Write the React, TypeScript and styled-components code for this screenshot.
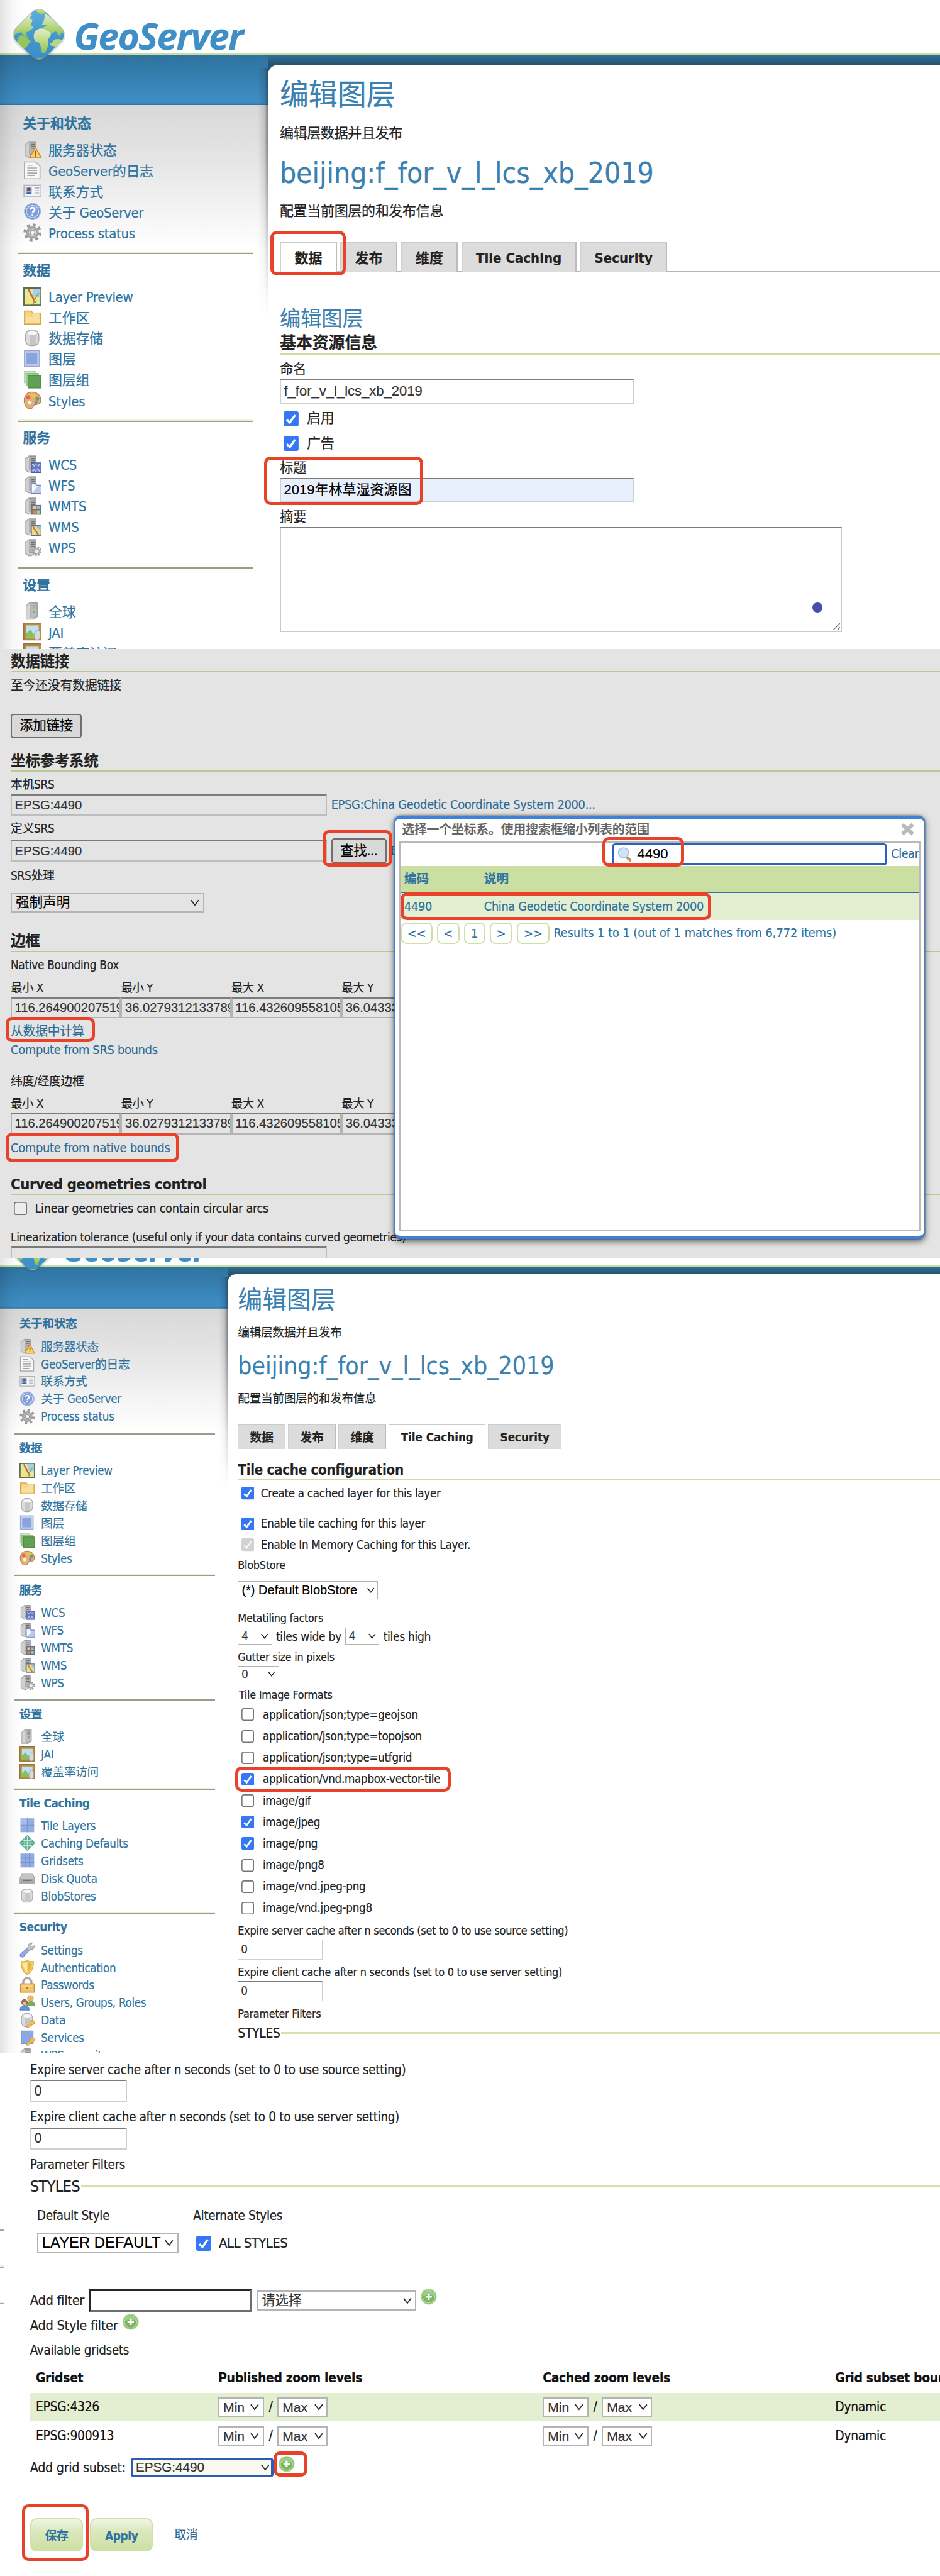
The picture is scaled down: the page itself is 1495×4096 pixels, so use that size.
import React from "react";
import styled, { createGlobalStyle, css } from "styled-components";

const ui = `"DejaVu Sans Condensed", "DejaVu Sans", "Noto Sans CJK SC", sans-serif`;
const field = `"Liberation Sans", "Noto Sans CJK SC", sans-serif`;
const link = "#2f74a0";
const title = "#3a80b0";
const mark = "#e8432a";

const Global = createGlobalStyle`
  html, body { margin: 0; padding: 0; background: #fff; }
  * { box-sizing: border-box; }
`;

const Page = styled.div`
  zoom: 0.9183;
  width: 1628px;
  height: 4460px;
  overflow: hidden;
  display: flex;
  flex-direction: column;
  background: #fff;
  color: #222;
  font-family: ${ui};
  font-stretch: condensed;
  font-size: 24px;
  letter-spacing: -0.015em;
  line-height: 31px;
  white-space: nowrap;
  -webkit-text-stroke: 0.25px;
`;

/* ---------- shared parts ---------- */

const Shot = styled.section<{ $h: number; $bg?: string }>`
  position: relative;
  flex: none;
  height: ${(p) => p.$h}px;
  overflow: hidden;
  background: ${(p) => p.$bg || "#fff"};
`;

const Mark = styled.div<{ $x: number; $y: number; $w: number; $h: number; $t?: number }>`
  position: absolute;
  z-index: 5;
  left: ${(p) => p.$x}px;
  top: ${(p) => p.$y}px;
  width: ${(p) => p.$w}px;
  height: ${(p) => p.$h}px;
  border: ${(p) => p.$t || 5.5}px solid ${mark};
  border-radius: 11px;
`;

const Label = styled.div<{ $gap?: number; $size?: number; $x?: number; $track?: number }>`
  flex: none;
  height: 30px;
  margin-top: ${(p) => p.$gap || 0}px;
  padding-left: ${(p) => p.$x || 0}px;
  font-size: ${(p) => p.$size || 24}px;
  letter-spacing: ${(p) => p.$track ?? -0.015}em;
`;

const Row = styled.div<{ $gap?: number; $h: number; $space?: number; $x?: number }>`
  flex: none;
  display: flex;
  align-items: center;
  height: ${(p) => p.$h}px;
  margin-top: ${(p) => p.$gap || 0}px;
  padding-left: ${(p) => p.$x || 0}px;
  gap: ${(p) => p.$space || 0}px;
`;

const Section = styled.div<{ $gap: number; $h: number; $size: number; $rule?: string }>`
  flex: none;
  height: ${(p) => p.$h}px;
  margin-top: ${(p) => p.$gap}px;
  border-bottom: 2.2px solid ${(p) => p.$rule || "#cddc9f"};
  font-weight: bold;
  font-size: ${(p) => p.$size}px;
  line-height: ${(p) => p.$h - 3}px;
`;

const Field = styled.div<{ $gap?: number; $w: number; $h: number; $bg?: string; $size?: number; $side?: string; $ink?: string }>`
  flex: none;
  display: flex;
  align-items: center;
  width: ${(p) => p.$w}px;
  height: ${(p) => p.$h}px;
  margin-top: ${(p) => p.$gap || 0}px;
  padding: 0 5px;
  overflow: hidden;
  border: 2.2px solid ${(p) => p.$side || "#cfcfcf"};
  border-top-color: #7b7b7b;
  background: ${(p) => p.$bg || "transparent"};
  color: ${(p) => p.$ink || "#333"};
  font-family: ${field};
  font-size: ${(p) => p.$size || 24}px;
  letter-spacing: 0;
`;

const Digits = styled.span`
  font-family: ${ui};
  font-size: 24px;
`;

const SelectBox = styled.div<{ $gap?: number; $w: number; $h: number; $size?: number; $focus?: boolean; $x?: number; $dark?: boolean; $bg?: string }>`
  flex: none;
  display: flex;
  align-items: center;
  justify-content: space-between;
  width: ${(p) => p.$w}px;
  height: ${(p) => p.$h}px;
  margin-top: ${(p) => p.$gap || 0}px;
  padding: 0 6px 0 ${(p) => p.$x || 6.5}px;
  border: 2.2px solid #b4b4b4;
  background: ${(p) => p.$bg || "#fff"};
  color: ${(p) => (p.$dark ? "#000" : "#333")};
  font-family: ${field};
  font-size: ${(p) => p.$size || 24}px;
  letter-spacing: 0;
  ${(p) =>
    p.$focus &&
    css`
      border: 4.4px solid #2b5cb8;
      border-radius: 5px;
      background: #f9f9f0;
      padding: 0 3px 0 4px;
    `}
`;

const Select = ({ text, ...rest }: { text: string } & React.ComponentProps<typeof SelectBox>) => (
  <SelectBox {...rest}>
    <span>{text}</span>
    <svg width="15" height="12" viewBox="0 0 15 12">
      <path d="M1 1.5 7.5 10 14 1.5" fill="none" stroke="#222" strokeWidth="1.9" />
    </svg>
  </SelectBox>
);

const Check = ({ state = "off", size = 26 }: { state?: "on" | "off" | "grey"; size?: number }) => (
  <svg width={size} height={size} viewBox="0 0 26 26">
    {state === "off" ? (
      <rect x="1.1" y="1.1" width="23.8" height="23.8" rx="4" fill="#fff" fillOpacity="0.35" stroke="#767676" strokeWidth="2" />
    ) : (
      <>
        <rect width="26" height="26" rx="3.5" fill={state === "on" ? "#3478f6" : "#d2d2d2"} />
        <path d="M5.5 14.5 10.8 19.5 20 6.5" fill="none" stroke={state === "on" ? "#fff" : "#f4f4f4"} strokeWidth="3.6" />
      </>
    )}
  </svg>
);

const PlusIcon = styled.svg.attrs({ viewBox: "0 0 28 28" })<{ $up?: number }>`
  flex: none;
  width: 28px;
  height: 28px;
  margin-bottom: ${(p) => p.$up || 0}px;
`;

const Plus = ({ up }: { up?: number }) => (
  <PlusIcon $up={up}>
    <circle cx="14" cy="14" r="13" fill="#8cc070" stroke="#a9d394" strokeWidth="1.6" />
    <circle cx="14" cy="14" r="10.6" fill="#7bb562" stroke="#c3e0b3" strokeWidth="1" />
    <path d="M4.5 13a9.5 9.5 0 0 1 19 0c-5-3-13-3-19 0z" fill="#a8d594" opacity="0.7" />
    <path d="M14 8.5v11M8.5 14h11" stroke="#fff" strokeWidth="3.4" />
  </PlusIcon>
);

/* ---------- sidebar icons, 16-unit grid ---------- */

const Server = () => (
  <>
    <path d="M1.5 4 5 1h6v11.5L7 15H4.5l-3-2z" fill="#cfcfcf" stroke="#a2a2a2" strokeWidth=".7" />
    <path d="M5.5 1.5H11v11H5.5z" fill="#b4b4b4" stroke="#8b8b8b" strokeWidth=".6" />
    <path d="M6.5 3.5h3.5M6.5 5.2h3.5M6.5 6.9h3.5" stroke="#6d6d6d" strokeWidth=".8" />
  </>
);
const Drum = () => (
  <>
    <rect x="2" y="1" width="11.5" height="13.5" rx="4.5" fill="#dcdcdc" stroke="#a9a9a9" strokeWidth=".8" />
    <rect x="5.6" y="4.6" width="5.4" height="9" fill="#c6c6c6" />
    <ellipse cx="7.8" cy="3.6" rx="4.6" ry="1.9" fill="#f6f6f6" stroke="#c4c4c4" strokeWidth=".5" />
  </>
);
const KeyShape = () => (
  <path d="M15.4 9.3a2.5 2.5 0 0 0-4.1-.6 2.4 2.4 0 0 0-.4 2.4L7 14.1l.4 1.5 1.9-.1 3.1-3a2.5 2.5 0 0 0 3-3.2z" fill="#f2c24f" stroke="#c8902b" strokeWidth=".6" />
);
const Picture = () => (
  <>
    <rect x=".4" y=".4" width="15.2" height="14.6" fill="#b98d43" stroke="#8e6a30" strokeWidth=".7" />
    <rect x="2.4" y="2.4" width="11" height="10.6" fill="#bfe0f3" />
    <path d="M2.4 9.5 6 6l3 4 4.4-3v6h-11z" fill="#86c25b" />
    <path d="M11.5 6.5a2.4 2.4 0 0 1 3 2.6v3.4a2.4 2.4 0 0 1-4.8 0V9z" fill="#d9d9d9" stroke="#a5a5a5" strokeWidth=".6" />
  </>
);

const icons: Record<string, React.ReactNode> = {
  status: (
    <>
      <Server />
      <path d="M10.6 6.3 15.6 15.3H5.4z" fill="#f6d470" stroke="#d5882a" strokeWidth=".9" strokeLinejoin="round" />
      <path d="M10.6 9.2v3.2M10.6 13.2v1" stroke="#8a5a12" strokeWidth="1.1" />
    </>
  ),
  logs: (
    <>
      <path d="M1 .8h9.6l3.9 3.6v11H1z" fill="#f8f8f8" stroke="#ababab" strokeWidth=".9" />
      <path d="M3.5 3.7h5M3.5 6h8.5M3.5 8.2h8.5M3.5 10.4h8.5M3.5 12.6h6.5" stroke="#a5a5a5" strokeWidth=".9" />
    </>
  ),
  contact: (
    <>
      <path d="M.6 3h14.8v10H.6z" fill="#f4f4f4" stroke="#b0b0b0" strokeWidth=".8" />
      <rect x="2" y="4.4" width="5.4" height="6.2" fill="#86b4ea" />
      <circle cx="4.8" cy="6.6" r="1.6" fill="#8a4b2c" />
      <path d="M2.4 10.6c.4-2 4.4-2 4.9 0z" fill="#3565b5" />
      <path d="M9.8 5.4h4" stroke="#84aee0" strokeWidth=".9" />
      <path d="M9.8 7.6h4M9.8 9.8h4" stroke="#bdbdbd" strokeWidth=".9" />
    </>
  ),
  about: (
    <>
      <circle cx="8" cy="7.8" r="6.9" fill="#6c8fd0" stroke="#a7bce2" strokeWidth="1" />
      <circle cx="8" cy="7.8" r="5.4" fill="#7d9edb" stroke="#dbe5f7" strokeWidth=".7" />
      <path d="M6.2 6.2c0-2.4 3.8-2.3 3.7-.1 0 1.5-1.9 1.4-1.9 3M8 10.3v1.3" fill="none" stroke="#fff" strokeWidth="1.5" />
    </>
  ),
  gear: (
    <>
      <circle cx="8" cy="8" r="6.4" fill="none" stroke="#9a9a9a" strokeWidth="2.8" strokeDasharray="2.5 2.52" />
      <circle cx="8" cy="8" r="4.3" fill="#dedede" stroke="#a8a8a8" strokeWidth="2.4" />
      <circle cx="8" cy="8" r="2" fill="#f7f7f7" stroke="#8f8f8f" strokeWidth=".7" />
    </>
  ),
  preview: (
    <>
      <rect x=".6" y=".6" width="14.8" height="14.8" fill="#dfe9a6" stroke="#5d6f4e" strokeWidth="1.2" />
      <path d="M8 1.2h6.8v7.3L9 9z" fill="#a9cdee" />
      <path d="M1.2 9 8 6l3 5-4 3.8H1.2z" fill="#f0e488" />
      <path d="M4.5 1.5c1.5 4 3.5 6 6 12" fill="none" stroke="#d95f2b" strokeWidth="1.5" />
      <path d="M13.5 5C11 8 9.5 11 8.5 14.6" fill="none" stroke="#8fae4c" strokeWidth="1" />
    </>
  ),
  folder: (
    <>
      <path d="M1 2.5h6l1.500 2H15v9.300H1z" fill="#f4cf76" stroke="#d6a748" strokeWidth=".8" />
      <path d="M3.4 5h4.800l1.200-1.400H14v9H1.800z" fill="#fbe6ad" opacity=".75" />
      <path d="M4.5 6.7h4" stroke="#e0ae4e" strokeWidth=".9" />
    </>
  ),
  store: <Drum />,
  layer: (
    <>
      <rect x="1" y=".8" width="13" height="13.6" fill="#c0d0f0" stroke="#9aaad4" strokeWidth=".9" />
      <rect x="2.8" y="2.6" width="9.4" height="10" fill="#8aa5dc" />
    </>
  ),
  group: (
    <>
      <rect x=".8" y=".8" width="10" height="10" fill="#cfe5cb" stroke="#b3d3ae" strokeWidth=".6" />
      <rect x="2.4" y="2.6" width="10.8" height="10.8" fill="#9bca90" stroke="#7cb271" strokeWidth=".6" />
      <rect x="4.2" y="4.4" width="11" height="10.8" fill="#62a056" stroke="#4c8a44" strokeWidth=".7" />
    </>
  ),
  palette: (
    <>
      <path d="M7.5.8C3 .8.6 4.500.8 8.500c.2 3.800 2 6.800 5.400 6.800 2.500 0 1.700-2.400 3.600-3.400 1.700-.9 5.400.4 5.400-4.300C15.200 3.500 11.800.8 7.500.8z" fill="#e6ae72" stroke="#b87f48" strokeWidth=".7" />
      <circle cx="4.3" cy="5.3" r="1.7" fill="#dc6650" />
      <circle cx="8.6" cy="3.6" r="1.6" fill="#e9c840" />
      <circle cx="12.2" cy="6.5" r="1.6" fill="#5ba56a" />
      <circle cx="11" cy="9.7" r="1.4" fill="#5f8fd0" />
      <circle cx="5.5" cy="9.7" r="1.7" fill="#fbf3e8" />
    </>
  ),
  wcs: (
    <>
      <Server />
      <rect x="7" y="7" width="8.5" height="8.5" fill="#6478c4" stroke="#4a5ca6" strokeWidth=".6" />
      <path d="M8 8l2 2m2 2 2.5 2.5M14.5 8l-2 2m-2 2L8 14.5M11 7.5v1.5M11 13.5V15" stroke="#b8c4ec" strokeWidth="1.2" />
    </>
  ),
  wfs: (
    <>
      <Server />
      <path d="M7 9V7h3.5l1 1.5h4V15.5H7z" fill="#f4f7fd" stroke="#7380ba" strokeWidth=".8" />
      <path d="M8 15l5-6h2v6z" fill="#b9c9ec" />
    </>
  ),
  wmts: (
    <>
      <Server />
      <rect x="7" y="7" width="8.5" height="8.5" fill="#6a6f8c" />
      <rect x="8" y="8" width="2.9" height="2.9" fill="#e8c77c" />
      <rect x="11.7" y="8" width="2.9" height="2.9" fill="#95b7e0" />
      <rect x="8" y="11.7" width="2.9" height="2.9" fill="#d98457" />
      <rect x="11.7" y="11.7" width="2.9" height="2.9" fill="#b7cc74" />
    </>
  ),
  wms: (
    <>
      <Server />
      <rect x="7" y="7" width="8.5" height="8.5" fill="#dfe18e" stroke="#5d6aa0" strokeWidth=".8" />
      <path d="M11 7.5h4v4z" fill="#93bde4" />
      <path d="M8.5 7.5c1 3 3 4 4.5 7.5" fill="none" stroke="#dc6a35" strokeWidth="1.3" />
    </>
  ),
  wps: (
    <>
      <Server />
      <circle cx="11.8" cy="11.2" r="3.2" fill="none" stroke="#9c9c9c" strokeWidth="2" strokeDasharray="1.5 1" />
      <circle cx="11.8" cy="11.2" r="2.2" fill="#eee" stroke="#b0b0b0" strokeWidth="1.2" />
    </>
  ),
  global: (
    <>
      <path d="M2.5 3.5 5.5.8h6.6v12L9 15H2.5z" fill="#d6d6d6" stroke="#a2a2a2" strokeWidth=".7" />
      <path d="M6.5 1.5H12v11L9 14H6.5z" fill="#bcbcbc" stroke="#969696" strokeWidth=".5" />
      <path d="M8 3.5h2.8M8 5.2h2.8" stroke="#808080" strokeWidth=".8" />
      <circle cx="9.5" cy="8.5" r=".9" fill="#5fbf5a" />
    </>
  ),
  image: <Picture />,
  tiles: (
    <>
      <rect x="1" y=".8" width="14" height="14.2" fill="#94aee2" />
      <path d="M8 .8V15M1 8h14" stroke="#7b97d2" strokeWidth=".9" />
      <path d="M1.6 1.4h5.8v6H1.6z" fill="#a8bdea" />
    </>
  ),
  globe: (
    <>
      <path d="M8 .6 15.4 8 8 15.4.6 8z" fill="#52aa96" stroke="#52aa96" strokeWidth="1.2" strokeLinejoin="round" />
      <path d="M8 .8V15.2M.8 8h14.4M3.5 5.5h9M3.5 10.5h9M5.3 3v10M10.7 3v10" stroke="#c9ecd0" strokeWidth=".9" />
    </>
  ),
  grid: (
    <>
      <rect x="1" y=".8" width="14" height="14.2" fill="#93abe2" />
      <path d="M5.6.8V15M10.3.8V15M1 5.5h14M1 10.2h14" stroke="#6f8bcc" strokeWidth=".9" />
    </>
  ),
  disk: (
    <>
      <path d="M2.8 3.2h10.4l2.3 5v5.6H.5V8.2z" fill="#c4c4c4" stroke="#9a9a9a" strokeWidth=".7" />
      <rect x=".9" y="8.4" width="14.2" height="5" fill="#a9a9a9" />
      <path d="M3.5 10.2h9" stroke="#707070" strokeWidth="1.4" />
    </>
  ),
  wrench: (
    <>
      <path d="M9 4.5a3.3 3.3 0 0 1 4.3-3.6L11.6 3l1.2 1.6 2.7-.9a3.3 3.3 0 0 1-4.3 3.8L9.5 9 7.2 7z" fill="#c3c3c3" stroke="#8e8e8e" strokeWidth=".6" />
      <path d="M7 7 9.5 9.2l-5 5.3a2 2 0 0 1-3.4-2.3z" fill="#94abe0" stroke="#6f88c4" strokeWidth=".7" />
    </>
  ),
  shield: (
    <>
      <path d="M8 .8c2 1.2 4.3 1.2 6.3.9C14.5 8 13 12.5 8 15.2 3 12.5 1.5 8 1.7 1.7c2 .3 4.3.3 6.3-.9z" fill="#f3cf62" stroke="#d7a93c" strokeWidth=".8" />
      <path d="M8 3c1.5.8 2.8.9 4.2.8 0 4-1.2 6.8-4.2 9z" fill="#e5b443" />
      <path d="M8 3c-1.5.8-2.8.9-4.2.8 0 4 1.2 6.8 4.2 9z" fill="#fbeaa6" />
    </>
  ),
  lock: (
    <>
      <path d="M3.8 7V5a4.2 4.2 0 0 1 8.4 0v2" fill="none" stroke="#a8a8a8" strokeWidth="2.2" />
      <rect x="1" y="6.6" width="14" height="8.8" fill="#edbf62" stroke="#c79138" strokeWidth=".8" />
      <path d="M2 9.2h12M2 12h12" stroke="#f7dc9a" strokeWidth="1" />
      <circle cx="8" cy="10.8" r="1.2" fill="#b87820" />
    </>
  ),
  users: (
    <>
      <path d="M7.5 10c0-4.5 8-4.5 8 0v1h-8z" fill="#78b35c" stroke="#5c9645" strokeWidth=".5" />
      <circle cx="11.2" cy="3.6" r="3" fill="#e8b96a" stroke="#bf8b45" strokeWidth=".5" />
      <path d="M.6 15c0-5 9.4-5 9.4 0v.6H.6z" fill="#5b97e0" stroke="#3e74bb" strokeWidth=".5" />
      <circle cx="5" cy="7.6" r="3" fill="#a86a48" stroke="#7a4a30" strokeWidth=".5" />
      <circle cx="5.2" cy="8.6" r="1.7" fill="#f0c09a" />
    </>
  ),
  data: (
    <>
      <Drum />
      <KeyShape />
    </>
  ),
  services: (
    <>
      <rect x="2" y=".8" width="12" height="13" fill="#8da8e0" stroke="#7691cf" strokeWidth=".6" />
      <KeyShape />
    </>
  ),
  wpssec: (
    <>
      <Server />
      <KeyShape />
    </>
  ),
};

/* ---------- GeoServer frame ---------- */

const Frame = styled.div<{ $zoom?: number; $pull?: number }>`
  position: relative;
  zoom: ${(p) => p.$zoom || 1};
  margin-top: ${(p) => -(p.$pull || 0)}px;
  height: 1800px;
  display: flex;
  align-items: flex-start;
  background:
    linear-gradient(#c6dca2, #c6dca2) 0 92px / 100% 4px no-repeat,
    linear-gradient(#2f729f, #3d8dc4 90%, #3d8dc4 96%, #2f6d98) 0 96px / 100% 86px no-repeat,
    linear-gradient(#d8d8d8, #e4e4e4 35%, #fff) 0 182px / 100% 250px no-repeat,
    #fff;
  &::before {
    content: "";
    position: absolute;
    inset: 0 auto 0 0;
    width: 44px;
    background: linear-gradient(to right, rgba(0, 0, 0, 0.11), rgba(0, 0, 0, 0.03) 50%, transparent);
  }
`;

const Side = styled.aside<{ $w: number }>`
  flex: none;
  position: relative;
  width: ${(p) => p.$w}px;
  display: flex;
  flex-direction: column;
`;

const Brand = styled.div`
  display: flex;
  height: 182px;
  padding: 10px 0 0 16px;
`;

const BrandName = styled.div`
  margin: 2px 0 0 8px;
  font-family: "Open Sans", "Noto Sans", sans-serif;
  font-stretch: normal;
  font-weight: bold;
  font-style: italic;
  font-size: 64px;
  line-height: 100px;
  letter-spacing: -0.029em;
  color: #3f8fc6;
`;

const Logo = () => (
  <svg width="104" height="106" viewBox="0 0 104 106">
    <defs>
      <linearGradient id="sea" x1="0" y1="0" x2="0" y2="1">
        <stop offset="0" stopColor="#66b3df" />
        <stop offset="0.5" stopColor="#4396cd" />
        <stop offset="1" stopColor="#3a8cc4" />
      </linearGradient>
      <linearGradient id="land" x1="0" y1="0" x2="0" y2="1">
        <stop offset="0" stopColor="#e3eecb" />
        <stop offset="0.6" stopColor="#b4d67a" />
        <stop offset="1" stopColor="#8cc152" />
      </linearGradient>
      <clipPath id="tile">
        <rect x="15.5" y="14.5" width="71" height="71" rx="17" transform="rotate(45 51 50)" />
      </clipPath>
    </defs>
    <rect x="14.5" y="13.5" width="73" height="73" rx="18" transform="rotate(45 51 50)" fill="rgba(90,90,90,.28)" />
    <rect x="13" y="14" width="76" height="76" rx="19" transform="rotate(45 51 52)" fill="rgba(90,90,90,.14)" />
    <g clipPath="url(#tile)">
      <rect width="104" height="106" fill="url(#sea)" />
      <path d="M44 5q7-5 19 1l-2 8-6 2-7-5z" fill="url(#land)" />
      <path d="M4 44 20 25l14-12 5 3-4 5 5 5-3 7 5 5-8 6-6 3 4 9-6-4-7-6-8 3-4 3z" fill="url(#land)" />
      <path d="M17 52q8-2 12 3l8 6-7 10-10 7-8-14z" fill="#93c65c" />
      <path d="M62 14l20 14 20 20-6 5-5-8-4 8-7-9-7 5-6-5-8 1-1-7 7-4-9-1 4-8z" fill="url(#land)" />
      <path d="M45 44q9-8 18-2l9 5-1 6-4 5v11l-5 13q-6 2-7-5l-2-12-8-3q-6-9 0-18z" fill="url(#land)" />
      <path d="M71 66l8-8 9 0 4 3-12 10-9-2z" fill="#b5d980" />
      <path d="M38 96q8-6 26-6l-2 12H42z" fill="#8cc152" />
    </g>
  </svg>
);

const NavGroup = styled.div<{ $first?: boolean }>`
  display: flex;
  flex-direction: column;
  margin-top: ${(p) => (p.$first ? 14 : 10.5)}px;
`;

const NavTitle = styled.div`
  height: 36px;
  margin: 0 0 11px;
  padding-left: 39.5px;
  line-height: 37px;
  font-weight: bold;
  color: ${link};
`;

const NavItem = styled.a`
  display: flex;
  align-items: center;
  height: 36px;
  padding-left: 40px;
  gap: 12px;
  color: ${link};
  line-height: 37px;
`;

const NavIcon = styled.svg.attrs({ viewBox: "0 0 16 16" })`
  width: 32px;
  height: 32px;
  margin-bottom: 4px;
`;

const Divider = styled.div`
  height: 4px;
  margin: 13px 26px 0 30px;
  background: linear-gradient(#eef2d8 45%, #999e8b 45%);
`;

type Entry = [string, string];
const nav: [string, Entry[]][] = [
  ["关于和状态", [["status", "服务器状态"], ["logs", "GeoServer的日志"], ["contact", "联系方式"], ["about", "关于 GeoServer"], ["gear", "Process status"]]],
  ["数据", [["preview", "Layer Preview"], ["folder", "工作区"], ["store", "数据存储"], ["layer", "图层"], ["group", "图层组"], ["palette", "Styles"]]],
  ["服务", [["wcs", "WCS"], ["wfs", "WFS"], ["wmts", "WMTS"], ["wms", "WMS"], ["wps", "WPS"]]],
  ["设置", [["global", "全球"], ["image", "JAI"], ["image", "覆盖率访问"]]],
  ["Tile Caching", [["tiles", "Tile Layers"], ["globe", "Caching Defaults"], ["grid", "Gridsets"], ["disk", "Disk Quota"], ["store", "BlobStores"]]],
  ["Security", [["wrench", "Settings"], ["shield", "Authentication"], ["lock", "Passwords"], ["users", "Users, Groups, Roles"], ["data", "Data"], ["services", "Services"], ["wpssec", "WPS security"]]],
];

const Sidebar = ({ width, groups }: { width: number; groups: number }) => (
  <Side $w={width}>
    <Brand>
      <Logo />
      <BrandName>GeoServer</BrandName>
    </Brand>
    {nav.slice(0, groups).map(([name, items], i) => (
      <React.Fragment key={name}>
        <NavGroup $first={i === 0}>
          <NavTitle>{name}</NavTitle>
          {items.map(([icon, text]) => (
            <NavItem key={text}>
              <NavIcon>{icons[icon]}</NavIcon>
              {text}
            </NavItem>
          ))}
        </NavGroup>
        {i < groups - 1 && <Divider />}
      </React.Fragment>
    ))}
  </Side>
);

const Main = styled.main`
  position: relative;
  isolation: isolate;
  flex: 1;
  align-self: stretch;
  min-width: 0;
  padding-top: 112px;
  display: flex;
  &::before {
    content: "";
    position: absolute;
    z-index: -1;
    left: -18px;
    top: 118px;
    width: 18px;
    height: 430px;
    background: linear-gradient(to left, rgba(30, 40, 50, 0.5), rgba(30, 40, 50, 0.14) 35%, transparent);
    mask-image: linear-gradient(#000 30%, transparent);
  }
  &::after {
    content: "";
    position: absolute;
    z-index: -1;
    inset: 96px 0 auto 0;
    height: 36px;
    background: linear-gradient(#2d6f99, #27546f 42%, #2b6288);
  }
`;

const Paper = styled.div`
  flex: 1;
  display: flex;
  flex-direction: column;
  align-items: stretch;
  padding-left: 20.5px;
  border-top-left-radius: 18px;
  background: #fff;
`;

const H1 = styled.div<{ $gap: number; $small?: boolean }>`
  flex: none;
  height: ${(p) => (p.$small ? 44 : 60)}px;
  margin-top: ${(p) => p.$gap}px;
  line-height: ${(p) => (p.$small ? 45 : 62)}px;
  font-size: ${(p) => (p.$small ? 36.2 : 50)}px;
  letter-spacing: 0;
  color: ${title};
`;

const Tabs = styled.div`
  flex: none;
  display: flex;
  gap: 5.7px;
  height: 53px;
  margin-top: 38px;
  border-bottom: 2.2px solid #b6b6b6;
`;

const Tab = styled.div<{ $on?: boolean }>`
  height: ${(p) => (p.$on ? 54 : 51)}px;
  padding: 0 23.4px;
  border: 2.2px solid #bcbcbc;
  border-top-color: #cbcbcb;
  border-left-color: #d0d0d0;
  border-bottom: 0;
  background: ${(p) => (p.$on ? "#fff" : "#dcdcdc")};
  font-weight: bold;
  line-height: 52px;
  letter-spacing: 0;
`;

const Heading = ({ tab }: { tab: string }) => (
  <>
    <H1 $gap={21}>编辑图层</H1>
    <Label $gap={23}>编辑层数据并且发布</Label>
    <H1 $gap={23}>beijing:f_for_v_l_lcs_xb_2019</H1>
    <Label $gap={22}>配置当前图层的和发布信息</Label>
    <Tabs>
      {["数据", "发布", "维度", "Tile Caching", "Security"].map((t) => (
        <Tab key={t} $on={t === tab}>
          {t}
        </Tab>
      ))}
    </Tabs>
  </>
);

const TextArea = styled.div`
  position: relative;
  flex: none;
  width: 974px;
  height: 182px;
  margin-top: 3px;
  border: 2.2px solid #cacaca;
  border-top-color: #7b7b7b;
`;

const Dot = styled.div`
  position: absolute;
  right: 32px;
  bottom: 32px;
  width: 17px;
  height: 17px;
  border-radius: 50%;
  background: #454fb0;
`;

const Grip = styled.svg`
  position: absolute;
  right: 1px;
  bottom: 1px;
`;

/* ---------- coordinate reference form ---------- */

const Form = styled.div<{ $left: number }>`
  display: flex;
  flex-direction: column;
  padding-left: ${(p) => p.$left}px;
  height: 100%;
`;

const GreyButton = styled.div<{ $gap?: number; $w: number }>`
  flex: none;
  display: flex;
  align-items: center;
  justify-content: center;
  width: ${(p) => p.$w}px;
  height: 43px;
  margin-top: ${(p) => p.$gap || 0}px;
  border: 2.2px solid #6f6f6f;
  border-radius: 5px;
  background: #d9d9d9;
  color: #000;
  font-family: ${field};
  font-size: 23.5px;
`;

const Link = styled.span<{ $size?: number }>`
  color: #2d6c96;
  font-size: ${(p) => p.$size || 21.7}px;
`;

const Columns = styled.div<{ $gap: number; $h: number }>`
  flex: none;
  display: grid;
  grid-template-columns: repeat(4, 191px);
  height: ${(p) => p.$h}px;
  margin-top: ${(p) => p.$gap}px;
  font-size: 20px;
  line-height: ${(p) => p.$h}px;
`;

const Bounds = ({ gap }: { gap: number }) => (
  <>
    <Columns $gap={gap} $h={28}>
      <span>最小 X</span>
      <span>最小 Y</span>
      <span>最大 X</span>
      <span>最大 Y</span>
    </Columns>
    <Columns $gap={2.5} $h={36.5}>
      {["116.264900207519", "36.0279312133789", "116.432609558105", "36.043333"].map((v) => (
        <Field key={v} $w={191} $h={36.5} $size={22} $side="#b4b4b4">
          {v}
        </Field>
      ))}
    </Columns>
  </>
);

const Modal = styled.div`
  position: absolute;
  z-index: 3;
  left: 683px;
  top: 288px;
  width: 919px;
  height: 733px;
  display: flex;
  flex-direction: column;
  padding: 5px 6px 8px;
  border: solid #3f80d8;
  border-width: 6px 3px 6px 3px;
  border-radius: 11px;
  background: #fff;
  box-shadow: 0 4px 12px rgba(0, 0, 0, 0.6), 0 0 3px rgba(0, 0, 0, 0.5);
`;

const ModalTitle = styled.div`
  display: flex;
  justify-content: space-between;
  height: 35px;
  padding: 0 8px 0 5px;
  line-height: 29px;
  font-size: 21.8px;
  font-weight: bold;
  color: #666;
  -webkit-text-stroke: 0;
`;

const ModalBody = styled.div`
  position: relative;
  flex: 1;
  border: 2.2px solid #b9b9b9;
  overflow: hidden;
  color: ${link};
  font-size: 21.5px;
`;

const SearchRow = styled.div`
  display: flex;
  align-items: center;
  justify-content: flex-end;
  height: 40px;
  gap: 7px;
`;

const SearchInput = styled.div`
  flex: none;
  display: flex;
  align-items: center;
  width: 477px;
  height: 38px;
  padding-left: 7px;
  gap: 8px;
  border: 4px solid #2c60bd;
  border-radius: 6px;
  background: #fff;
  color: #000;
  font-family: ${field};
  font-size: 24px;
  letter-spacing: 0;
`;

const ResultRow = styled.div<{ $head?: boolean }>`
  display: grid;
  grid-template-columns: 138px 1fr;
  height: 47px;
  padding-left: 7px;
  line-height: ${(p) => (p.$head ? 46 : 48)}px;
  background: ${(p) => (p.$head ? "#cadfa1" : "#e4eed1")};
  font-weight: ${(p) => (p.$head ? "bold" : "normal")};
  border-bottom: ${(p) => (p.$head ? "2.2px solid #33749c" : "0")};
`;

const Pager = styled.div`
  display: flex;
  align-items: center;
  height: 37px;
  margin-top: 4px;
  padding-left: 1px;
  letter-spacing: 0;
`;

const PageButton = styled.span<{ $w: number; $mr: number }>`
  width: ${(p) => p.$w}px;
  height: 37px;
  margin-right: ${(p) => p.$mr}px;
  border: 2.2px solid #cfe0a6;
  border-radius: 9px;
  text-align: center;
  line-height: 34px;
`;

/* ---------- gridset table ---------- */

const GridRow = styled.div<{ $bg?: string; $h: number; $bold?: boolean; $gap?: number }>`
  flex: none;
  display: grid;
  grid-template-columns: 316px 562px 506.5px 400px;
  align-items: center;
  height: ${(p) => p.$h}px;
  width: 1780px;
  margin-top: ${(p) => p.$gap || 0}px;
  padding-left: 10px;
  background: ${(p) => p.$bg || "transparent"};
  color: #111;
  font-size: 22.8px;
  line-height: 32px;
  font-weight: ${(p) => (p.$bold ? "bold" : "normal")};
`;

const Range = styled.div`
  display: flex;
  align-items: center;
  gap: 8.5px;
`;

const Tick = styled.div<{ $y: number }>`
  position: absolute;
  left: 0;
  top: ${(p) => p.$y}px;
  width: 8px;
  height: 4px;
  background: linear-gradient(#eef2d8 40%, #a5aa98 40%);
`;

const FilterInput = styled.div`
  flex: none;
  width: 283px;
  height: 41px;
  border: 4.4px solid #6e6e6e;
  border-top-color: #262626;
  border-left-color: #262626;
  background: #fff;
`;

const ActionButton = styled.span<{ $w: number; $mr: number }>`
  width: ${(p) => p.$w}px;
  height: 58px;
  margin-right: ${(p) => p.$mr}px;
  border: 2.2px solid #cfdfab;
  border-radius: 11px;
  background: linear-gradient(#f0f6e4, #dbe8bd 38%, #cce0a2);
  color: ${link};
  font-size: 20.5px;
  font-weight: bold;
  text-align: center;
  line-height: 59px;
`;

const Legend = styled.div<{ $gap: number }>`
  flex: none;
  display: flex;
  align-items: center;
  height: 30px;
  margin-top: ${(p) => p.$gap}px;
  font-size: 27.5px;
  letter-spacing: -0.03em;
  &::after {
    content: "";
    flex: 1;
    height: 3px;
    margin-left: 2px;
    background: #d3e0b0;
  }
`;

const formats: [string, boolean][] = [
  ["application/json;type=geojson", false],
  ["application/json;type=topojson", false],
  ["application/json;type=utfgrid", false],
  ["application/vnd.mapbox-vector-tile", true],
  ["image/gif", false],
  ["image/jpeg", true],
  ["image/png", true],
  ["image/png8", false],
  ["image/vnd.jpeg-png", false],
  ["image/vnd.jpeg-png8", false],
];

const DataTab = () => (
  <Shot $h={1124}>
    <Frame>
      <Sidebar width={464} groups={4} />
      <Main>
        <Paper>
          <Heading tab="数据" />
          <H1 $gap={57} $small>编辑图层</H1>
          <Section $gap={3} $h={38} $size={28.5}>基本资源信息</Section>
          <Label $gap={10} $size={23.3}>命名</Label>
          <Field $gap={3} $w={613} $h={42} $size={24}>f_for_v_l_lcs_xb_2019</Field>
          <Row $gap={11} $h={30} $space={14} $x={7}>
            <Check state="on" />
            启用
          </Row>
          <Row $gap={13} $h={30} $space={14} $x={7}>
            <Check state="on" />
            广告
          </Row>
          <Label $gap={12} $size={23.3}>标题</Label>
          <Field $gap={3} $w={613} $h={42} $size={24} $bg="#e8effd" $ink="#000">2019年林草湿资源图</Field>
          <Label $gap={10} $size={23.3}>摘要</Label>
          <TextArea>
            <Dot />
            <Grip width="14" height="14" viewBox="0 0 14 14">
              <path d="M1 13 13 1M8 13l5-5" stroke="#666" strokeWidth="1.5" />
            </Grip>
          </TextArea>
        </Paper>
      </Main>
    </Frame>
    <Mark $x={468} $y={400} $w={131} $h={77} />
    <Mark $x={457} $y={791} $w={276} $h={83} />
  </Shot>
);

const CrsForm = () => (
  <Shot $h={1055} $bg="#e4e4e4">
    <Form $left={18.5}>
      <Section $gap={6.5} $h={34} $size={25.7} $rule="#b9c98f">数据链接</Section>
      <Label $gap={8} $size={21.7}>至今还没有数据链接</Label>
      <GreyButton $gap={33} $w={123}>添加链接</GreyButton>
      <Section $gap={24} $h={34} $size={25.7} $rule="#b9c98f">坐标参考系统</Section>
      <Label $gap={7.5} $size={20.5}>本机SRS</Label>
      <Row $gap={1.5} $h={36.5} $space={7}>
        <Field $w={548} $h={36.5} $size={22} $side="#bdbdbd">EPSG:4490</Field>
        <Link>EPSG:China Geodetic Coordinate System 2000...</Link>
      </Row>
      <Label $gap={8} $size={20.5}>定义SRS</Label>
      <Row $gap={1.5} $h={43.5} $space={7}>
        <Field $w={548} $h={36.5} $size={22} $side="#bdbdbd">EPSG:4490</Field>
        <GreyButton $w={96}>查找...</GreyButton>
        <Link>EPSG:China</Link>
      </Row>
      <Label $gap={7} $size={20.5}>SRS处理</Label>
      <Select $gap={14} $w={335} $h={34} $size={23.5} $dark $bg="#e4e4e4" text="强制声明" />
      <Section $gap={34.5} $h={34} $size={25.7} $rule="#b9c98f">边框</Section>
      <Label $gap={8} $size={20.5}>Native Bounding Box</Label>
      <Bounds gap={10} />
      <Row $gap={9} $h={30}>
        <Link>从数据中计算</Link>
      </Row>
      <Row $gap={2} $h={30}>
        <Link>Compute from SRS bounds</Link>
      </Row>
      <Label $gap={23.5} $size={20.5}>纬度/经度边框</Label>
      <Bounds gap={9.5} />
      <Row $gap={9} $h={30}>
        <Link>Compute from native bounds</Link>
      </Row>
      <Section $gap={31.5} $h={34} $size={25.7} $rule="#b9c98f">Curved geometries control</Section>
      <Row $gap={9} $h={30} $space={13} $x={6}>
        <Check size={23} />
        <Label $size={21.5}>Linear geometries can contain circular arcs</Label>
      </Row>
      <Label $gap={20} $size={20.5}>Linearization tolerance (useful only if your data contains curved geometries)</Label>
      <Field $gap={1} $w={548} $h={36} $side="#bdbdbd" />
    </Form>
    <Modal>
      <ModalTitle>
        选择一个坐标系。使用搜索框缩小列表的范围
        <svg width="27" height="26" viewBox="0 0 27 26">
          <path d="M4.5 5.5 22.5 22M22.5 5.5 4.5 22" stroke="#b9b9b9" strokeWidth="6.5" />
        </svg>
      </ModalTitle>
      <ModalBody>
        <SearchRow>
          <SearchInput>
            <svg width="26" height="26" viewBox="0 0 26 26">
              <path d="M15.5 17 23.5 24" stroke="#c58f52" strokeWidth="4.5" />
              <circle cx="10.5" cy="10" r="8.8" fill="#cfe3fa" stroke="#aac0e4" strokeWidth="2" />
            </svg>
            4490
          </SearchInput>
          <Link $size={21.3}>Clear</Link>
        </SearchRow>
        <ResultRow $head>
          <span>编码</span>
          <span>说明</span>
        </ResultRow>
        <ResultRow>
          <span>4490</span>
          <span>China Geodetic Coordinate System 2000</span>
        </ResultRow>
        <Pager>
          <PageButton $w={55} $mr={7}>&lt;&lt;</PageButton>
          <PageButton $w={40} $mr={7}>&lt;</PageButton>
          <PageButton $w={37} $mr={7.5}>1</PageButton>
          <PageButton $w={40} $mr={7.5}>&gt;</PageButton>
          <PageButton $w={56} $mr={7.5}>&gt;&gt;</PageButton>
          Results 1 to 1 (out of 1 matches from 6,772 items)
        </Pager>
      </ModalBody>
    </Modal>
    <Mark $x={559} $y={313} $w={120} $h={64} />
    <Mark $x={10} $y={637} $w={154} $h={43} />
    <Mark $x={10} $y={837.5} $w={300} $h={51} />
    <Mark $x={1043} $y={325.5} $w={142} $h={51} />
    <Mark $x={694} $y={421} $w={538} $h={48.5} />
  </Shot>
);

const CachingTab = () => (
  <Shot $h={1377}>
    <Frame $zoom={0.846} $pull={79.5}>
      <Sidebar width={466.5} groups={6} />
      <Main>
        <Paper>
          <Heading tab="Tile Caching" />
          <Section $gap={24} $h={37} $size={28.5}>Tile cache configuration</Section>
          <Row $gap={12.5} $h={30} $space={14} $x={7}>
            <Check state="on" />
            <Label $size={24}>Create a cached layer for this layer</Label>
          </Row>
          <Row $gap={32} $h={30} $space={14} $x={7}>
            <Check state="on" />
            <Label $size={24}>Enable tile caching for this layer</Label>
          </Row>
          <Row $gap={13.5} $h={30} $space={14} $x={7}>
            <Check state="grey" />
            <Label $size={24}>Enable In Memory Caching for this Layer.</Label>
          </Row>
          <Label $gap={12} $size={23}>BlobStore</Label>
          <Select $gap={17} $w={287} $h={37} $size={25.8} $dark text="(*) Default BlobStore" />
          <Label $gap={23.6} $size={23}>Metatiling factors</Label>
          <Row $gap={5} $h={34} $space={8}>
            <Select $w={70} $h={34} $size={23} text="4" />
            <Label $size={24.5}>tiles wide by</Label>
            <Select $w={70} $h={34} $size={23} text="4" />
            <Label $size={24.5}>tiles high</Label>
          </Row>
          <Label $gap={11} $size={23}>Gutter size in pixels</Label>
          <Select $gap={2.7} $w={84} $h={34} $size={23} text="0" />
          <Label $gap={11} $size={23} $x={2}>Tile Image Formats</Label>
          <Row $h={3.5} />
          {formats.map(([name, on]) => (
            <Row key={name} $h={44} $space={18} $x={7}>
              <Check state={on ? "on" : "off"} />
              <Label $size={24}>{name}</Label>
            </Row>
          ))}
          <Label $gap={9} $size={23.1}>Expire server cache after n seconds (set to 0 to use source setting)</Label>
          <Field $gap={3.5} $w={173} $h={40.5}>
            <Digits>0</Digits>
          </Field>
          <Label $gap={11} $size={23.1}>Expire client cache after n seconds (set to 0 to use server setting)</Label>
          <Field $gap={3.5} $w={173} $h={40.5}>
            <Digits>0</Digits>
          </Field>
          <Label $gap={10.7} $size={23}>Parameter Filters</Label>
          <Legend $gap={10}>STYLES</Legend>
        </Paper>
      </Main>
    </Frame>
    <Mark $x={407.5} $y={879.5} $w={373} $h={44.5} />
  </Shot>
);

const MinMax = () => (
  <Range>
    <Select $w={79} $h={34} $size={23} text="Min" />
    /
    <Select $w={87} $h={34} $size={23} text="Max" />
  </Range>
);

const Gridsets = () => (
  <Shot $h={904}>
    <Form $left={52}>
      <Label $gap={12.5} $size={22.25}>Expire server cache after n seconds (set to 0 to use source setting)</Label>
      <Field $gap={2.5} $w={168} $h={39.5}>
        <Digits>0</Digits>
      </Field>
      <Label $gap={10} $size={22.25}>Expire client cache after n seconds (set to 0 to use server setting)</Label>
      <Field $gap={3.2} $w={168} $h={39}>
        <Digits>0</Digits>
      </Field>
      <Label $gap={10} $size={22.3}>Parameter Filters</Label>
      <Legend $gap={8.5}>STYLES</Legend>
      <Row $gap={20.5} $h={30} $x={12}>
        <Label $size={22.3}>Default Style</Label>
        <Label $size={22.3} $x={145}>Alternate Styles</Label>
      </Row>
      <Row $gap={14.5} $h={36} $x={12} $space={31}>
        <Select $w={245} $h={36} $size={26} $dark text="LAYER DEFAULT" />
        <Row $h={30} $space={13}>
          <Check state="on" />
          <Label $size={24} $track={-0.025}>ALL STYLES</Label>
        </Row>
      </Row>
      <Row $gap={61} $h={41} $space={8}>
        <Label $size={23.7}>Add filter</Label>
        <FilterInput />
        <Select $w={276} $h={34} $size={23} text="请选择" />
        <Plus up={13} />
      </Row>
      <Row $gap={8} $h={30} $space={8}>
        <Label $size={23.7}>Add Style filter</Label>
        <Plus up={13} />
      </Row>
      <Label $gap={12} $size={22.3}>Available gridsets</Label>
      <GridRow $h={50} $bold $gap={9}>
        <span>Gridset</span>
        <span>Published zoom levels</span>
        <span>Cached zoom levels</span>
        <span>Grid subset bounds</span>
      </GridRow>
      <GridRow $h={50} $bg="#e4eed1">
        <span>EPSG:4326</span>
        <MinMax />
        <MinMax />
        <span>Dynamic</span>
      </GridRow>
      <GridRow $h={50}>
        <span>EPSG:900913</span>
        <MinMax />
        <MinMax />
        <span>Dynamic</span>
      </GridRow>
      <Row $gap={12.5} $h={34} $space={9}>
        <Label $size={23.3}>Add grid subset:</Label>
        <Select $w={247} $h={34} $size={22.5} $focus text="EPSG:4490" />
        <Plus up={13} />
      </Row>
      <Row $gap={71} $h={58}>
        <ActionButton $w={92} $mr={12}>保存</ActionButton>
        <ActionButton $w={109} $mr={37}>Apply</ActionButton>
        <Link $size={20.5}>取消</Link>
      </Row>
    </Form>
    <Tick $y={303} />
    <Tick $y={366.5} />
    <Tick $y={430} />
    <Mark $x={474} $y={688.5} $w={59} $h={44} />
    <Mark $x={38} $y={780} $w={116} $h={98.5} />
  </Shot>
);

export default function App() {
  return (
    <>
      <Global />
      <Page>
        <DataTab />
        <CrsForm />
        <CachingTab />
        <Gridsets />
      </Page>
    </>
  );
}
